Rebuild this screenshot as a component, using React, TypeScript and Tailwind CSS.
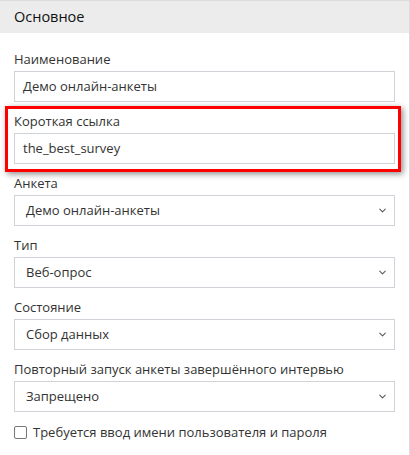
import { ChevronDown } from 'lucide-react'

const font = { fontFamily: '"Open Sans", "Noto Sans", sans-serif' }

function Label({ children }: { children: React.ReactNode }) {
  return <div className="flex h-[24px] items-start pt-[3px] text-[13px] leading-[18px] text-[#333]">{children}</div>
}

function TextInput({ value }: { value: string }) {
  return (
    <div className="flex h-[31px] items-center border border-[#cfd2d6] bg-white px-[8px] text-[13px] text-[#333]">
      {value}
    </div>
  )
}

function Select({ value }: { value: string }) {
  return (
    <div className="flex h-[31px] items-center justify-between border border-[#cfd2d6] bg-white pl-[11px] pr-[6px] text-[13px] text-[#333]">
      <span>{value}</span>
      <ChevronDown size={11} strokeWidth={2.2} className="text-[#555]" />
    </div>
  )
}

export default function App() {
  return (
    <div className="h-[455px] w-[410px] bg-white" style={font}>
      <div className="h-full border-t border-r border-[#dcdcdc]">
        <div className="flex h-[32px] items-center bg-[#ececec] px-[14px] text-[14.5px] text-[#111]">Основное</div>
        <div className="flex flex-col gap-[7px] pt-[14px] pr-[14px] pl-[14px]">
          <div>
            <Label>Наименование</Label>
            <TextInput value="Демо онлайн-анкеты" />
          </div>
          <div className="relative">
            <Label>Короткая ссылка</Label>
            <TextInput value="the_best_survey" />
            <div className="pointer-events-none absolute -top-[3px] -right-[6px] -bottom-[8px] -left-[9px] border-[3px] border-[#ff0000] shadow-[2px_2px_6px_rgba(0,0,0,0.45)]" />
          </div>
          <div>
            <Label>Анкета</Label>
            <Select value="Демо онлайн-анкеты" />
          </div>
          <div>
            <Label>Тип</Label>
            <Select value="Веб-опрос" />
          </div>
          <div>
            <Label>Состояние</Label>
            <Select value="Сбор данных" />
          </div>
          <div>
            <Label>Повторный запуск анкеты завершённого интервью</Label>
            <Select value="Запрещено" />
          </div>
          <label className="flex items-center gap-[6px] pt-[4px] text-[13px] text-[#333]">
            <span className="h-[13px] w-[13px] rounded-[2px] border border-[#777] bg-white" />
            Требуется ввод имени пользователя и пароля
          </label>
        </div>
      </div>
    </div>
  )
}
